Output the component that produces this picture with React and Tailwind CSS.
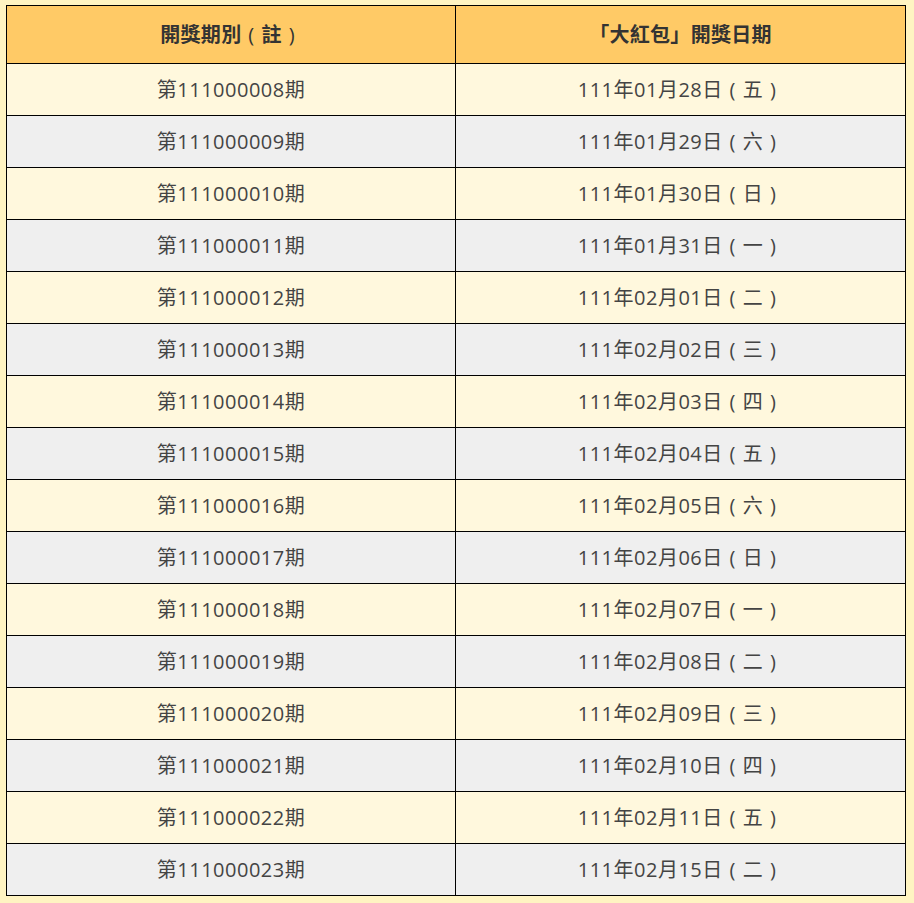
import React from "react";

const rows = [
  ["第111000008期", "111年01月28日", "五"],
  ["第111000009期", "111年01月29日", "六"],
  ["第111000010期", "111年01月30日", "日"],
  ["第111000011期", "111年01月31日", "一"],
  ["第111000012期", "111年02月01日", "二"],
  ["第111000013期", "111年02月02日", "三"],
  ["第111000014期", "111年02月03日", "四"],
  ["第111000015期", "111年02月04日", "五"],
  ["第111000016期", "111年02月05日", "六"],
  ["第111000017期", "111年02月06日", "日"],
  ["第111000018期", "111年02月07日", "一"],
  ["第111000019期", "111年02月08日", "二"],
  ["第111000020期", "111年02月09日", "三"],
  ["第111000021期", "111年02月10日", "四"],
  ["第111000022期", "111年02月11日", "五"],
  ["第111000023期", "111年02月15日", "二"],
];

function Paren({ children }) {
  return (
    <>
      <span className="inline-block w-[1em] text-center font-normal">(</span>
      {children}
      <span className="inline-block w-[1em] text-center font-normal">)</span>
    </>
  );
}

export default function App() {
  return (
    <div
      className="min-h-[903px] w-[914px] bg-[#fff4c2] pl-[6px] pt-[5px]"
      style={{ fontFamily: '"Open Sans", "Noto Sans CJK TC", sans-serif' }}
    >
      <table className="w-[900px] border-collapse border border-black">
        <thead>
          <tr className="h-[58px] bg-[#ffca66]">
            <th className="w-[449px] border border-black pt-[1px] text-[20px] font-bold tracking-[0.3px] text-[#333]">
              開獎期別<Paren>註</Paren>
            </th>
            <th className="border border-black pt-[1px] text-[20px] font-bold tracking-[0.3px] text-[#333]">
              「大紅包」開獎日期
            </th>
          </tr>
        </thead>
        <tbody>
          {rows.map((r, i) => (
            <tr
              key={i}
              className={`h-[52px] ${i % 2 === 0 ? "bg-[#fff8dd]" : "bg-[#efefef]"}`}
            >
              <td className="border border-black pt-[1px] text-center text-[20px] tracking-[0.5px] text-[#444]">
                {r[0]}
              </td>
              <td className="border border-black pt-[1px] text-center text-[20px] tracking-[0.5px] text-[#444]">
                {r[1]}
                <Paren>{r[2]}</Paren>
              </td>
            </tr>
          ))}
        </tbody>
      </table>
    </div>
  );
}
